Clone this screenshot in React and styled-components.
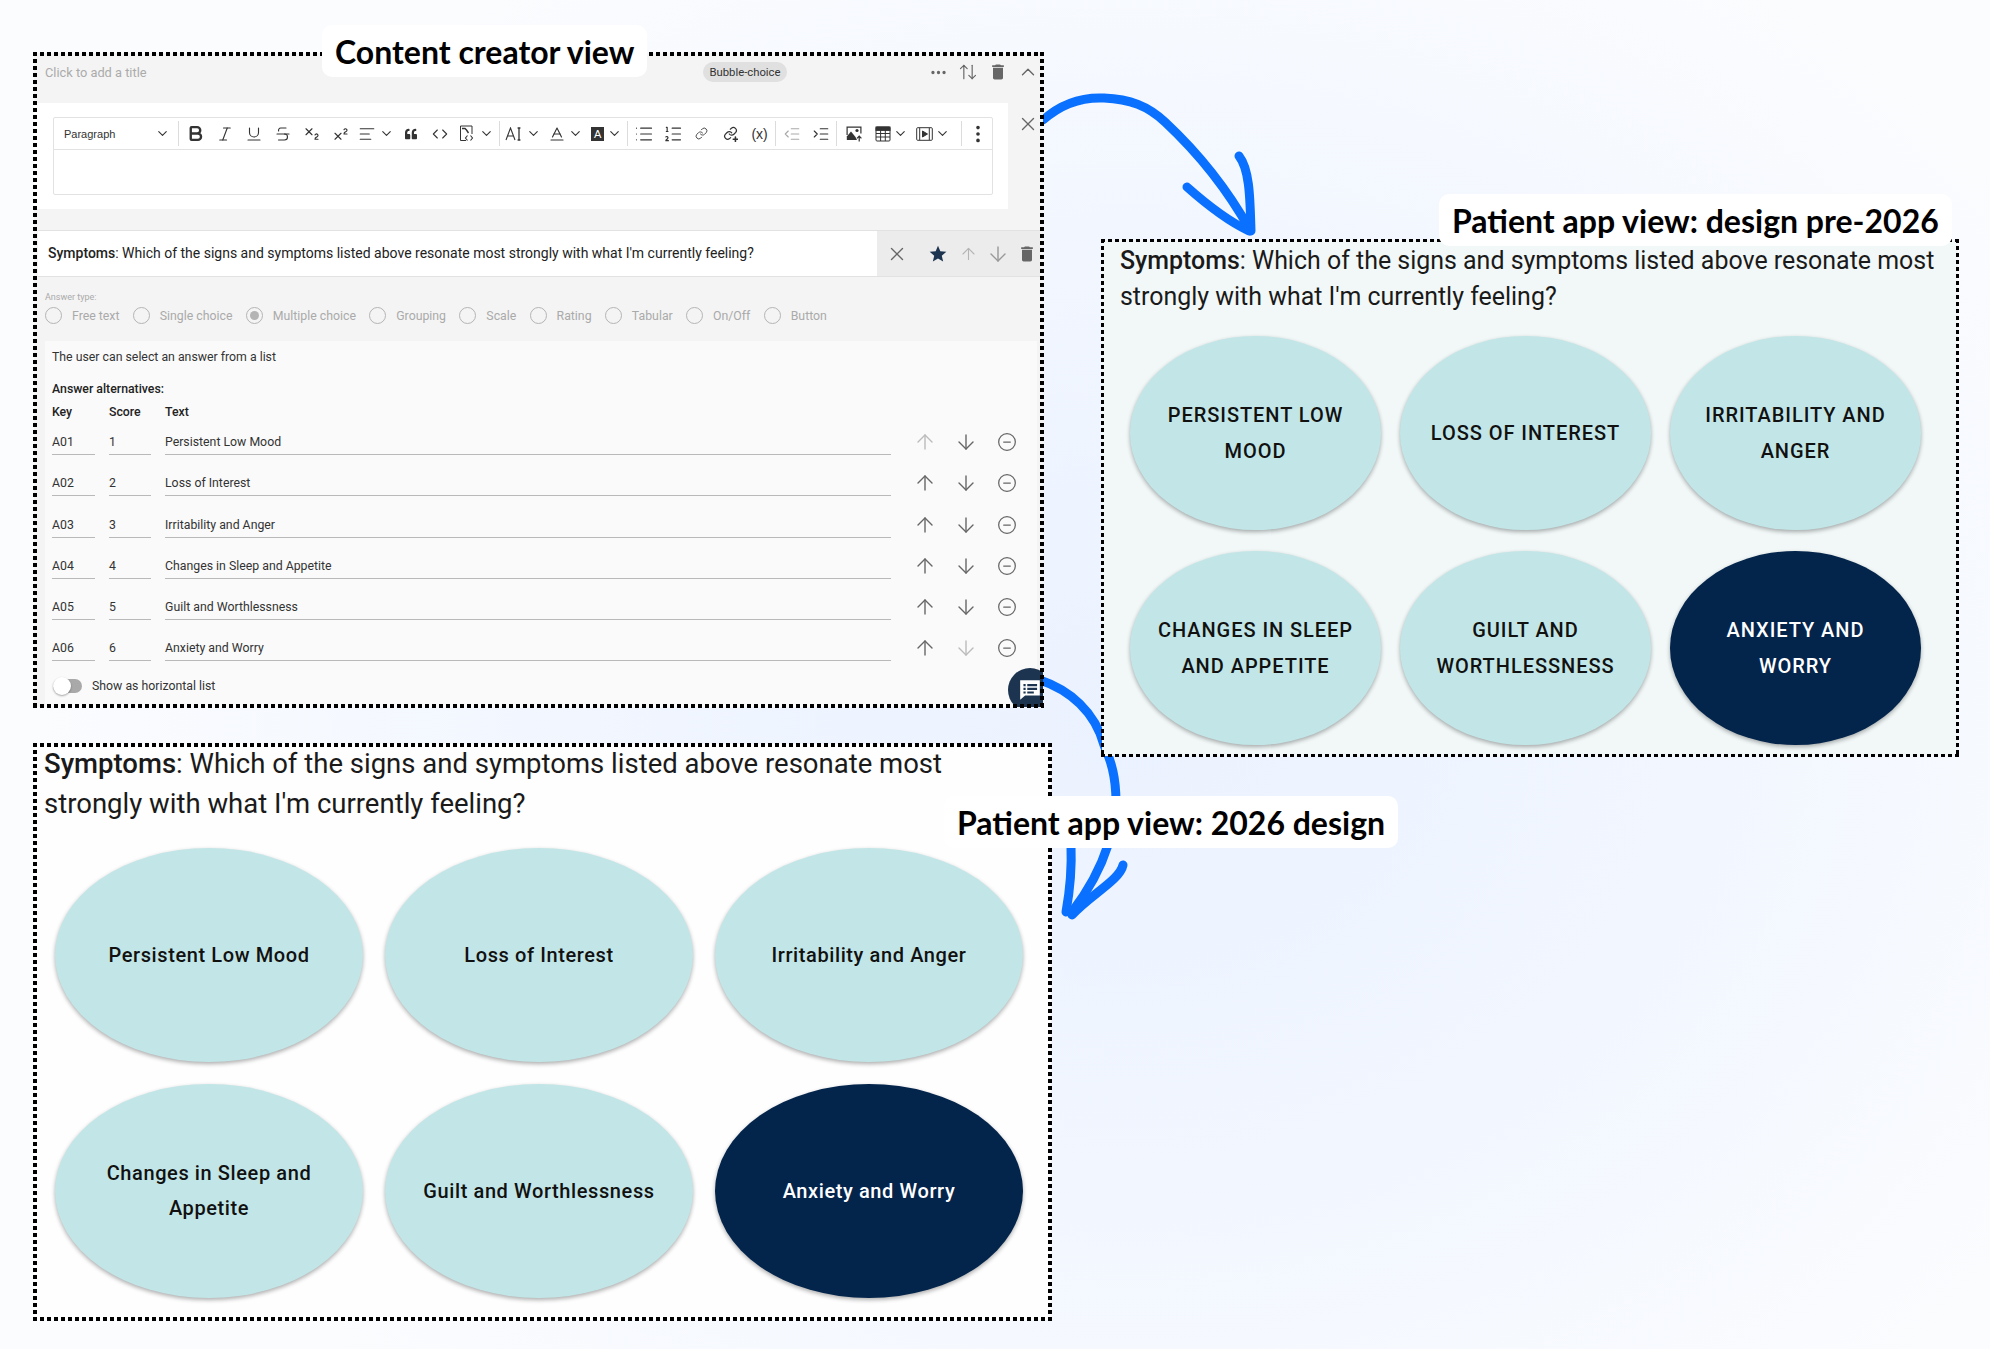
import styled, { createGlobalStyle } from "styled-components";
import {
  AlignLeft,
  ArrowDown,
  ArrowUp,
  ArrowUpDown,
  Baseline,
  Bold,
  ChevronDown,
  ChevronUp,
  CircleMinus,
  Code,
  EllipsisVertical,
  IndentDecrease,
  IndentIncrease,
  Italic,
  Link as LinkIcon,
  List,
  ListOrdered,
  MoreHorizontal,
  Strikethrough,
  Subscript,
  Superscript,
  Underline,
  X,
} from "lucide-react";
import { MdDelete, MdStar } from "react-icons/md";
import { FaQuoteLeft } from "react-icons/fa";

const GlobalStyle = createGlobalStyle`
  html, body {
    margin: 0;
    padding: 0;
  }
  body {
    font-family: Roboto, "Liberation Sans", sans-serif;
    color: #111;
  }
`;

const Page = styled.div`
  position: relative;
  width: 1990px;
  height: 1349px;
  overflow: hidden;
  box-sizing: border-box;
  padding: 53px 0 0 34px;
  display: flex;
  align-items: flex-start;
  gap: 51px;
  background: radial-gradient(ellipse 1100px 900px at 1130px 720px, #ebf2ff 0%, #f1f6ff 50%, #fbfcfe 100%);
`;

const LeftColumn = styled.div`
  width: 1017px;
  display: flex;
  flex-direction: column;
  gap: 37px;
`;

const RightColumn = styled.div`
  width: 856px;
  margin-top: 187px;
`;

const ArrowLayer = styled.svg`
  position: absolute;
  left: 0;
  top: 0;
`;

// dotted frame drawn with gradients, css dotted comes out round
const Panel = styled.section`
  position: relative;
  width: ${(props) => props.$width}px;
  height: ${(props) => props.$height}px;
  background: ${(props) => props.$bg};
  &::after {
    content: "";
    position: absolute;
    inset: -1px;
    pointer-events: none;
    background:
      repeating-linear-gradient(90deg, #000 0 4px, transparent 4px 7px) top left / 100% ${(props) => props.$dot}px no-repeat,
      repeating-linear-gradient(90deg, #000 0 4px, transparent 4px 7px) bottom left / 100% ${(props) => props.$dot}px no-repeat,
      repeating-linear-gradient(180deg, #000 0 4px, transparent 4px 7px) top left / ${(props) => props.$dot}px 100% no-repeat,
      repeating-linear-gradient(180deg, #000 0 4px, transparent 4px 7px) top right / ${(props) => props.$dot}px 100% no-repeat;
  }
`;

const Label = styled.div`
  position: absolute;
  z-index: 2;
  left: ${(props) => props.$left}px;
  top: ${(props) => props.$top}px;
  height: 52px;
  box-sizing: border-box;
  padding: 0 13px;
  display: flex;
  align-items: center;
  background: #fff;
  border-radius: 10px;
  font-family: Lato, sans-serif;
  font-weight: 700;
  font-size: 32px;
  color: #000;
  white-space: nowrap;
`;

/* ---------- content creator panel ---------- */

const CreatorBody = styled.div`
  position: relative;
  height: 100%;
  overflow: hidden;
  background: #f4f4f4;
  display: flex;
  flex-direction: column;
`;

const TitleBar = styled.div`
  height: 50px;
  box-sizing: border-box;
  padding: 0 0 12px 11px;
  display: flex;
  align-items: center;
`;

const TitleHint = styled.div`
  width: 658px;
  font-size: 12.8px;
  color: #ababab;
`;

const Chip = styled.div`
  width: 84px;
  height: 20px;
  border-radius: 10px;
  background: #e0e0e0;
  display: flex;
  align-items: center;
  justify-content: center;
  font-size: 11.3px;
  color: #333;
`;

const TitleActions = styled.div`
  margin-left: auto;
  display: flex;
  align-items: center;
  color: #666;
`;

const EditorRow = styled.div`
  display: flex;
  align-items: flex-start;
  height: 106px;
`;

const EditorBlock = styled.div`
  width: 974px;
  height: 100%;
  box-sizing: border-box;
  padding: 14px 15px 0 19px;
  background: #fff;
`;

const Editor = styled.div`
  height: 78px;
  box-sizing: border-box;
  border: 1px solid #e2e2e2;
  border-radius: 2px;
`;

const Toolbar = styled.div`
  height: 31px;
  border-bottom: 1px solid #e2e2e2;
  display: flex;
  align-items: center;
  color: #333;
`;

const StyleSelect = styled.div`
  width: 124px;
  box-sizing: border-box;
  padding: 0 6px 0 10px;
  display: flex;
  align-items: center;
  justify-content: space-between;
  font-family: "Liberation Sans", sans-serif;
  font-size: 11px;
  color: #333;
`;

const Separator = styled.div`
  width: 1px;
  height: 25px;
  background: #dcdcdc;
  margin: 0 ${(props) => props.$space ?? 1}px;
`;

const ToolButton = styled.div`
  width: ${(props) => props.$width ?? 29}px;
  height: 100%;
  flex: none;
  display: flex;
  align-items: center;
  justify-content: center;
  gap: ${(props) => props.$gap ?? 3}px;
  color: ${(props) => props.$color ?? "#333"};
  font-family: "Liberation Sans", sans-serif;
`;

const ToolText = styled.span`
  font-size: ${(props) => props.$size}px;
  line-height: 1;
`;

const HighlightA = styled.span`
  width: 13px;
  height: 14px;
  background: #333;
  color: #fff;
  font-size: 11px;
  display: flex;
  align-items: center;
  justify-content: center;
`;

const CloseSlot = styled.div`
  flex: 1;
  padding-top: 10px;
  display: flex;
  justify-content: center;
  padding-left: 4px;
  color: #666;
`;

const QuestionRow = styled.div`
  margin: 21px 3px 0 4px;
  height: 47px;
  border-top: 1px solid #e2e2e2;
  border-bottom: 1px solid #e2e2e2;
  box-sizing: border-box;
  display: flex;
`;

const QuestionText = styled.div`
  width: 839px;
  box-sizing: border-box;
  padding: 0 0 2px 10px;
  background: #fff;
  display: flex;
  align-items: center;
  font-size: 14px;
  color: #222;
  white-space: pre;
`;

const Strong = styled.span`
  font-weight: 500;
`;

const QuestionActions = styled.div`
  flex: 1;
  background: #ececec;
  display: flex;
  align-items: center;
  color: #666;
`;

const ActionSlot = styled.div`
  width: ${(props) => props.$width}px;
  display: flex;
  justify-content: center;
  color: ${(props) => props.$color ?? "inherit"};
`;

const AnswerType = styled.div`
  height: 64px;
  box-sizing: border-box;
  padding: 15px 0 0 11px;
`;

const AnswerTypeLabel = styled.div`
  font-size: 9px;
  line-height: 10px;
  color: #aaa;
`;

const RadioRow = styled.div`
  margin-top: 5px;
  display: flex;
  gap: 13.3px;
`;

const RadioItem = styled.div`
  display: flex;
  align-items: center;
  gap: 10px;
  font-size: 12.3px;
  color: #aaa;
`;

const Radio = styled.span`
  width: 17px;
  height: 17px;
  box-sizing: border-box;
  border: 1.5px solid #b4b4b4;
  border-radius: 50%;
  display: flex;
  align-items: center;
  justify-content: center;
  &::after {
    content: "";
    width: 9px;
    height: 9px;
    border-radius: 50%;
    background: ${(props) => (props.$checked ? "#b4b4b4" : "transparent")};
  }
`;

const AnswerCard = styled.div`
  flex: 1;
  margin: 0 6px 0 11px;
  padding: 9px 0 0 7px;
  background: #fafafa;
`;

const Hint = styled.div`
  font-size: 12.3px;
  line-height: 15px;
  color: #333;
`;

const SectionTitle = styled.div`
  margin-top: 17px;
  font-size: 12.3px;
  line-height: 15px;
  font-weight: 500;
  color: #222;
`;

const AnswerGrid = styled.div`
  margin-top: 8px;
`;

const GridRow = styled.div`
  display: grid;
  grid-template-columns: 57px 56px 740px 40px 41px 41px;
  height: ${(props) => props.$height}px;
`;

const HeadCell = styled.div`
  font-size: 12.3px;
  line-height: 15px;
  font-weight: 500;
  color: #222;
`;

const Cell = styled.div`
  height: 25px;
  margin: 3px 14px 0 0;
  box-sizing: border-box;
  border-bottom: 1px solid #b9b9b9;
  display: flex;
  align-items: center;
  font-size: 12.3px;
  color: #333;
`;

const RowIcon = styled.div`
  height: 30px;
  display: flex;
  align-items: center;
  justify-content: center;
  color: ${(props) => (props.$muted ? "#bbb" : "#666")};
`;

const ToggleRow = styled.div`
  display: flex;
  align-items: center;
  gap: 10px;
  margin-top: 4px;
  font-size: 12.3px;
  color: #333;
`;

const Toggle = styled.div`
  position: relative;
  width: 29px;
  height: 14px;
  margin-left: 1px;
  border-radius: 7px;
  background: #a9a9a9;
  &::before {
    content: "";
    position: absolute;
    left: 0;
    top: -2px;
    width: 18px;
    height: 18px;
    border-radius: 50%;
    background: #fff;
    box-shadow: 0 1px 2px rgba(0, 0, 0, 0.35);
  }
`;

const Fab = styled.div`
  position: absolute;
  right: -9px;
  bottom: -5px;
  width: 44px;
  height: 44px;
  border-radius: 50%;
  background: #1d3450;
  display: flex;
  align-items: center;
  justify-content: center;
`;

/* ---------- patient views ---------- */

const PatientBody = styled.div`
  box-sizing: border-box;
  height: 100%;
  padding: ${(props) => props.$padding};
`;

const PatientQuestion = styled.div`
  font-size: ${(props) => props.$size}px;
  line-height: ${(props) => props.$line}px;
  color: #1a1a1a;
`;

const BubbleGrid = styled.div`
  margin: ${(props) => props.$top}px 0 0 ${(props) => props.$left}px;
  display: grid;
  grid-template-columns: repeat(3, ${(props) => props.$w}px);
  grid-auto-rows: ${(props) => props.$h}px;
  column-gap: ${(props) => props.$gapX}px;
  row-gap: ${(props) => props.$gapY}px;
`;

const Bubble = styled.div`
  box-sizing: border-box;
  padding: 0 ${(props) => (props.$upper ? 24 : 30)}px;
  border-radius: 50%;
  background: ${(props) => (props.$active ? "#03244b" : "#c2e6e7")};
  color: ${(props) => (props.$active ? "#fff" : "#111")};
  box-shadow: 0 2px 4px rgba(0, 0, 0, 0.32);
  display: flex;
  align-items: center;
  justify-content: center;
  text-align: center;
  font-size: 20px;
  font-weight: 500;
  line-height: ${(props) => (props.$upper ? 36 : 35)}px;
  letter-spacing: ${(props) => (props.$upper ? 0.95 : 0.6)}px;
  text-transform: ${(props) => (props.$upper ? "uppercase" : "none")};
`;

/* ---------- drawn icons ---------- */

const SourceIcon = () => (
  <svg width="15" height="17" viewBox="0 0 15 17" fill="none" stroke="currentColor" strokeWidth="1">
    <path d="M7 15.5H1.5V1H13V9" />
    <path d="M3 3.5h3l1.5 1.5 2 3" strokeWidth="1.4" />
    <path d="M8.5 10.5 6.5 13l2 2.5M11.5 10.5l2 2.5-2 2.5" strokeWidth="1.1" />
  </svg>
);

const FontSizeIcon = () => (
  <svg width="17" height="14" viewBox="0 0 17 14" fill="none" stroke="currentColor" strokeWidth="1.1">
    <path d="M1 13 5.5 1 10 13M2.5 9h6" />
    <path d="M14 1v12M12.6 1h2.8M12.6 13h2.8" strokeWidth="1.3" />
  </svg>
);

const LinkAddIcon = () => (
  <svg width="15" height="16" viewBox="0 0 24 26" fill="none" stroke="currentColor" strokeWidth="2" strokeLinecap="round">
    <path d="M10 13a5 5 0 0 0 7.5.5l3-3a5 5 0 0 0-7-7l-1.7 1.7" />
    <path d="M14 11a5 5 0 0 0-7.5-.5l-3 3a5 5 0 0 0 7 7l1.7-1.7" />
    <path d="M20 18v7M16.5 21.5h7" strokeWidth="2.6" />
  </svg>
);

const ImageUpIcon = () => (
  <svg width="17" height="16" viewBox="0 0 17 16" fill="#333">
    <path d="M.5.5h15v7h-1.2V1.7H1.7V9L.5 9z" />
    <circle cx="11" cy="4.5" r="1.6" />
    <path d="M.8 14V10.5L5 5.5l4.5 5.5L11 14z" />
    <path d="M13.2 15.5v-5M11 12.3l2.2-2.3 2.2 2.3" fill="none" stroke="#333" strokeWidth="1.2" />
  </svg>
);

const TableIcon = () => (
  <svg width="16" height="16" viewBox="0 0 16 16" fill="none" stroke="#333" strokeWidth="1">
    <rect x="1" y="1" width="14" height="14" rx="1" />
    <rect x="1" y="1" width="14" height="3.4" fill="#333" />
    <path d="M1 7.5h14M1 11h14M5.6 4v11M10.3 4v11" />
  </svg>
);

const MediaIcon = () => (
  <svg width="17" height="14" viewBox="0 0 17 14" fill="none" stroke="#333" strokeWidth="1">
    <rect x="0.7" y="0.7" width="15.6" height="12.6" rx="1" />
    <path d="M3.7 1v12M13.3 1v12" />
    <path d="M6.5 4v6l5-3z" fill="#333" />
  </svg>
);

const ChatIcon = () => (
  <svg width="24" height="24" viewBox="0 0 22 22">
    <path d="M2 2h18v14H6.5L2 20z" fill="#fff" />
    <path d="M5 5.5h2v2H5zM5 9h2v2H5zM5 12.3h2v2H5zM8.5 5.5h9v2h-9zM8.5 9h9v2h-9zM8.5 12.3h6v2h-6z" fill="#1d3450" />
  </svg>
);

const Chev = () => <ChevronDown size={15} strokeWidth={1.8} />;

const answerTypes = [
  "Free text",
  "Single choice",
  "Multiple choice",
  "Grouping",
  "Scale",
  "Rating",
  "Tabular",
  "On/Off",
  "Button",
];

const answers = [
  { key: "A01", score: 1, text: "Persistent Low Mood" },
  { key: "A02", score: 2, text: "Loss of Interest" },
  { key: "A03", score: 3, text: "Irritability and Anger" },
  { key: "A04", score: 4, text: "Changes in Sleep and Appetite" },
  { key: "A05", score: 5, text: "Guilt and Worthlessness" },
  { key: "A06", score: 6, text: "Anxiety and Worry" },
];

const QuestionCopy = () => (
  <>
    <Strong>Symptoms</Strong>: Which of the signs and symptoms listed above resonate most strongly with what I'm currently feeling?
  </>
);

const thin = { size: 18, strokeWidth: 1.5 };
const rowArrow = { size: 24, strokeWidth: 1.4 };

const ContentCreator = () => (
  <Panel $width={1009} $height={654} $bg="#f4f4f4" $dot={4}>
    <Label $left={288} $top={-28}>Content creator view</Label>
    <CreatorBody>
      <TitleBar>
        <TitleHint>Click to add a title</TitleHint>
        <Chip>Bubble-choice</Chip>
        <TitleActions>
          <ActionSlot $width={30}><MoreHorizontal size={19} strokeWidth={2.2} /></ActionSlot>
          <ActionSlot $width={30}><ArrowUpDown size={20} strokeWidth={1.4} /></ActionSlot>
          <ActionSlot $width={30}><MdDelete size={20} /></ActionSlot>
          <ActionSlot $width={30}><ChevronUp size={22} strokeWidth={1.5} /></ActionSlot>
        </TitleActions>
      </TitleBar>

      <EditorRow>
        <EditorBlock>
          <Editor>
            <Toolbar>
              <StyleSelect>
                Paragraph
                <Chev />
              </StyleSelect>
              <Separator $space={2} />
              <ToolButton><Bold size={19} strokeWidth={3} /></ToolButton>
              <ToolButton><Italic {...thin} /></ToolButton>
              <ToolButton><Underline {...thin} /></ToolButton>
              <ToolButton><Strikethrough {...thin} /></ToolButton>
              <ToolButton><Subscript {...thin} /></ToolButton>
              <ToolButton><Superscript {...thin} /></ToolButton>
              <ToolButton $width={41}><AlignLeft {...thin} /><Chev /></ToolButton>
              <ToolButton><FaQuoteLeft size={12} /></ToolButton>
              <ToolButton><Code size={16} strokeWidth={1.6} /></ToolButton>
              <ToolButton $width={44} $gap={5}><SourceIcon /><Chev /></ToolButton>
              <Separator />
              <ToolButton $width={43} $gap={4}><FontSizeIcon /><Chev /></ToolButton>
              <ToolButton $width={43} $gap={1.5}><Baseline {...thin} /><Chev /></ToolButton>
              <ToolButton $width={39}><HighlightA>A</HighlightA><Chev /></ToolButton>
              <Separator />
              <ToolButton><List size={20} strokeWidth={1.4} /></ToolButton>
              <ToolButton><ListOrdered size={20} strokeWidth={1.4} /></ToolButton>
              <ToolButton><LinkIcon size={13} strokeWidth={1.6} /></ToolButton>
              <ToolButton><LinkAddIcon /></ToolButton>
              <ToolButton><ToolText $size={14}>(x)</ToolText></ToolButton>
              <Separator />
              <ToolButton $color="#a9a9a9"><IndentDecrease {...thin} /></ToolButton>
              <ToolButton><IndentIncrease {...thin} /></ToolButton>
              <Separator />
              <ToolButton $width={32}><ImageUpIcon /></ToolButton>
              <ToolButton $width={42} $gap={2}><TableIcon /><Chev /></ToolButton>
              <ToolButton $width={42} $gap={2}><MediaIcon /><Chev /></ToolButton>
              <ToolButton $width={6} />
              <Separator />
              <ToolButton><EllipsisVertical size={22} strokeWidth={2} /></ToolButton>
            </Toolbar>
          </Editor>
        </EditorBlock>
        <CloseSlot><X size={22} strokeWidth={1.5} /></CloseSlot>
      </EditorRow>

      <QuestionRow>
        <QuestionText><QuestionCopy /></QuestionText>
        <QuestionActions>
          <ActionSlot $width={40}><X size={22} strokeWidth={1.5} /></ActionSlot>
          <ActionSlot $width={42} $color="#1d3450"><MdStar size={20} /></ActionSlot>
          <ActionSlot $width={19} $color="#b5b5b5"><ArrowUp {...rowArrow} /></ActionSlot>
          <ActionSlot $width={39} $color="#999"><ArrowDown {...rowArrow} /></ActionSlot>
          <ActionSlot $width={20}><MdDelete size={20} /></ActionSlot>
        </QuestionActions>
      </QuestionRow>

      <AnswerType>
        <AnswerTypeLabel>Answer type:</AnswerTypeLabel>
        <RadioRow>
          {answerTypes.map((name) => (
            <RadioItem key={name}>
              <Radio $checked={name === "Multiple choice"} />
              {name}
            </RadioItem>
          ))}
        </RadioRow>
      </AnswerType>

      <AnswerCard>
        <Hint>The user can select an answer from a list</Hint>
        <SectionTitle>Answer alternatives:</SectionTitle>
        <AnswerGrid>
          <GridRow $height={22}>
            <HeadCell>Key</HeadCell>
            <HeadCell>Score</HeadCell>
            <HeadCell>Text</HeadCell>
          </GridRow>
          {answers.map((row, i) => (
            <GridRow key={row.key} $height={41.3}>
              <Cell>{row.key}</Cell>
              <Cell>{row.score}</Cell>
              <Cell>{row.text}</Cell>
              <RowIcon $muted={i === 0}><ArrowUp {...rowArrow} /></RowIcon>
              <RowIcon $muted={i === answers.length - 1}><ArrowDown {...rowArrow} /></RowIcon>
              <RowIcon><CircleMinus size={20} strokeWidth={1.5} /></RowIcon>
            </GridRow>
          ))}
        </AnswerGrid>
        <ToggleRow>
          <Toggle />
          Show as horizontal list
        </ToggleRow>
      </AnswerCard>

      <Fab><ChatIcon /></Fab>
    </CreatorBody>
  </Panel>
);

const PatientView = ({ width, height, bg, dot, padding, size, line, grid, upper, children }) => (
  <Panel $width={width} $height={height} $bg={bg} $dot={dot}>
    {children}
    <PatientBody $padding={padding}>
      <PatientQuestion $size={size} $line={line}><QuestionCopy /></PatientQuestion>
      <BubbleGrid $top={grid.top} $left={grid.left} $w={grid.w} $h={grid.h} $gapX={grid.gapX} $gapY={grid.gapY}>
        {answers.map((row, i) => (
          <Bubble key={row.key} $upper={upper} $active={i === answers.length - 1}>{row.text}</Bubble>
        ))}
      </BubbleGrid>
    </PatientBody>
  </Panel>
);

export default function App() {
  return (
    <Page>
      <GlobalStyle />
      <ArrowLayer width="1990" height="1349" fill="none" stroke="#0a70ff" strokeLinecap="round" strokeLinejoin="round">
        <g strokeWidth="9">
          <path d="M1043 120C1062 103 1082 97 1104 98C1130 99 1148 106 1165 122C1195 150 1225 185 1250 230" />
          <path d="M1187 187C1205 203 1230 222 1249 231" />
          <path d="M1239 156C1250 170 1250 200 1251 231" />
        </g>
        <g strokeWidth="9">
          <path d="M1040 680C1070 690 1095 712 1104 745C1118 775 1120 810 1108 845C1100 870 1085 895 1072 912" />
          <path d="M1071 845C1072 870 1070 890 1066 912" />
          <path d="M1123 865C1120 880 1090 895 1072 915" />
        </g>
      </ArrowLayer>
      <LeftColumn>
        <ContentCreator />
        <PatientView
          width={1017}
          height={576}
          bg="#fefefe"
          dot={4}
          padding="0 21px 0 10px"
          size={27.5}
          line={40}
          grid={{ top: 24, left: 11, w: 308, h: 214, gapX: 22, gapY: 22 }}
        >
          <Label $left={910} $top={52}>Patient app view: 2026 design</Label>
        </PatientView>
      </LeftColumn>
      <RightColumn>
        <PatientView
          width={856}
          height={516}
          bg="#f2f8f8"
          dot={3}
          padding="3px 0 0 18px"
          size={24.95}
          line={36}
          grid={{ top: 21, left: 10, w: 251, h: 194, gapX: 19, gapY: 21 }}
          upper
        >
          <Label $left={337} $top={-46}>Patient app view: design pre-2026</Label>
        </PatientView>
      </RightColumn>
    </Page>
  );
}
